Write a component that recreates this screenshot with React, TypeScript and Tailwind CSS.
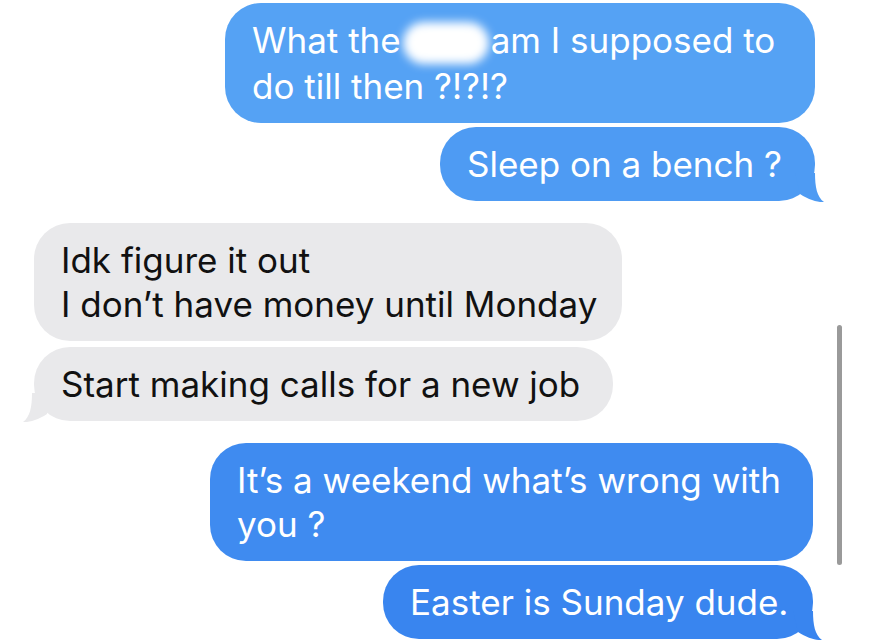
import type { ReactNode } from "react";

type Side = "me" | "them";

interface BubbleProps {
  side: Side;
  width: string;
  color: string;
  tail?: boolean;
  children: ReactNode;
}

function TailRight({ color }: { color: string }) {
  return (
    <svg
      className="absolute -right-[10px] -bottom-[2px] h-[30px] w-[30px]"
      viewBox="0 0 30 30"
    >
      <path d="M20 0 C20 14 22 24 29 29 C23 29.5 14 27 5 21 L0 0 Z" fill={color} />
    </svg>
  );
}

function TailLeft({ color }: { color: string }) {
  return (
    <svg
      className="absolute -left-[12px] -bottom-[2px] h-[30px] w-[30px]"
      viewBox="0 0 30 30"
    >
      <path d="M10 0 C10 14 8 24 1 29 C7 29.5 16 27 25 21 L30 0 Z" fill={color} />
    </svg>
  );
}

function Bubble({ side, width, color, tail, children }: BubbleProps) {
  const text = side === "me" ? "text-white" : "text-[#111]";
  return (
    <div
      className={`relative rounded-[36px] py-[15px] pl-[27px] ${width} ${text}`}
      style={{ backgroundColor: color }}
    >
      <p className="relative z-10 whitespace-nowrap text-[35px] leading-[44px]">{children}</p>
      {tail && side === "me" && <TailRight color={color} />}
      {tail && side === "them" && <TailLeft color={color} />}
    </div>
  );
}

export default function App() {
  return (
    <div className="relative h-[640px] w-[871px] overflow-hidden bg-white font-['Inter',sans-serif]">
      <div className="flex flex-col pt-[3px]">
        <div className="flex flex-col items-end gap-[4px] pr-[56px]">
          <Bubble side="me" width="w-[590px]" color="#55a2f4">
            What the
            <span className="mx-[2px] inline-block h-[42px] w-[86px] rounded-[22px] bg-white align-middle blur-[5px]" />
            am I supposed to
            <br />
            do till then ?!?!?
          </Bubble>
          <Bubble side="me" width="w-[375px]" color="#4e9bf3" tail>
            Sleep on a bench ?
          </Bubble>
        </div>

        <div className="mt-[22px] flex flex-col items-start gap-[6px] pl-[34px]">
          <Bubble side="them" width="w-[588px]" color="#e9e9eb">
            Idk figure it out
            <br />I don’t have money until Monday
          </Bubble>
          <Bubble side="them" width="w-[579px]" color="#e9e9eb" tail>
            Start making calls for a new job
          </Bubble>
        </div>

        <div className="mt-[22px] flex flex-col items-end gap-[4px] pr-[58px]">
          <Bubble side="me" width="w-[603px]" color="#3f8bf0">
            It’s a weekend what’s wrong with
            <br />
            you ?
          </Bubble>
          <Bubble side="me" width="w-[430px]" color="#3985ef" tail>
            Easter is Sunday dude.
          </Bubble>
        </div>
      </div>

      <div className="absolute left-[837px] top-[325px] h-[240px] w-[5px] rounded-full bg-[#9a9a9a]" />
    </div>
  );
}
